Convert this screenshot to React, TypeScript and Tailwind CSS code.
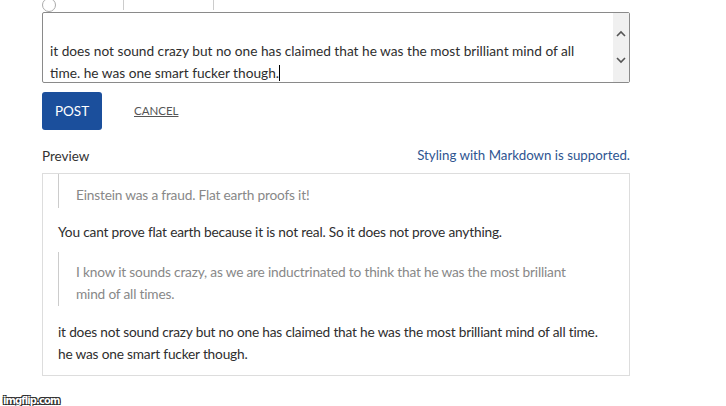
import React from 'react';

const font = { fontFamily: 'Lato, "Noto Sans", sans-serif' };

function Chevron({ up }: { up?: boolean }) {
  return (
    <svg width="10" height="7" viewBox="0 0 10 7" className="block">
      <path d={up ? 'M1 6 L5 2 L9 6' : 'M1 1 L5 5 L9 1'} fill="none" stroke="#555" strokeWidth="1.6" />
    </svg>
  );
}

export default function App() {
  return (
    <div className="w-[726px] h-[406px] bg-white relative overflow-hidden" style={font}>
      <div className="pl-[42px] w-[630px]">
        {/* cut off row above the textarea */}
        <div className="h-[12px] overflow-hidden relative">
          <div className="flex items-end h-[12px] -mt-[6px] text-[13px] text-[#999]">
            <div className="w-[14px] h-[14px] rounded-full border border-[#aaa] -mb-[6px]" />
            <div className="w-[67px]" />
            <div className="w-px h-[14px] bg-[#ccc] -mb-[4px]" />
            <div className="w-[89px]" />
            <div className="w-px h-[14px] bg-[#ccc] -mb-[4px]" />
          </div>
        </div>

        <div className="flex h-[71px] border border-[#8a8a8a] rounded-[2px] bg-white">
          <div className="flex-1 pl-[7px] pr-[30px] pt-[27px] text-[13.7px] leading-[22px] text-[#2e2e2e]">
            it does not sound crazy but no one has claimed that he was the most brilliant mind of all time. he was one smart fucker though.
            <span className="inline-block w-px h-[16px] bg-black align-[-3px]" />
          </div>
          <div className="w-[16px] bg-[#f0f0f0] flex flex-col items-center pt-[17px] gap-[20px]">
            <Chevron up />
            <Chevron />
          </div>
        </div>

        <div className="flex items-center mt-[9px] gap-[32px]">
          <button className="w-[60px] h-[38px] rounded-[3px] bg-[#1b4f9c] text-white text-[13.5px]">POST</button>
          <span className="text-[11.5px] text-[#555] underline">CANCEL</span>
        </div>

        <div className="flex justify-between items-center mt-[17px] h-[18px]">
          <span className="text-[13.5px] text-[#333]">Preview</span>
          <span className="text-[13.3px] text-[#2e5591]">Styling with Markdown is supported.</span>
        </div>

        <div className="mt-[8px] h-[203px] border border-[#ddd] px-[15px] text-[13.7px] tracking-[-0.19px] text-[#2e2e2e] leading-[22px]">
          <div className="border-l border-[#ccc] pl-[17px] pt-[10px] pb-[2px] text-[#888]">
            Einstein was a fraud. Flat earth proofs it!
          </div>
          <p className="mt-[13px]">You cant prove flat earth because it is not real. So it does not prove anything.</p>
          <div className="mt-[9px] border-l border-[#ccc] pl-[17px] pt-[9px] pb-[1px] text-[#888] pr-[40px]">
            I know it sounds crazy, as we are inductrinated to think that he was the most brilliant mind of all times.
          </div>
          <p className="mt-[15px]">
            it does not sound crazy but no one has claimed that he was the most brilliant mind of all time. he was one smart fucker though.
          </p>
        </div>
      </div>

      <div
        className="absolute left-[3px] top-[393px] text-[10px] font-bold text-white tracking-[-0.9px]"
        style={{ fontFamily: '"DejaVu Sans", sans-serif', textShadow: '0 0 1px #000, 1px 1px 0 #333, -1px -1px 0 #333, 1px -1px 0 #333, -1px 1px 0 #333' }}
      >
        imgflip.com
      </div>
    </div>
  );
}
